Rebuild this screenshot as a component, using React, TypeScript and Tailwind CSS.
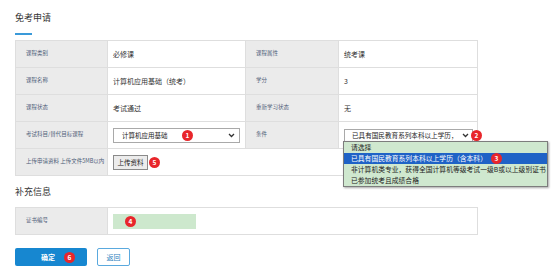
import React from "react";

const Badge = ({ n, className }: { n: number; className: string }) => (
  <span
    className={
      "absolute flex h-[11px] w-[11px] items-center justify-center rounded-full bg-[#e8262b] text-[6.5px] font-bold leading-none text-white " +
      className
    }
  >
    {n}
  </span>
);

const Chevron = () => (
  <svg width="7" height="5" viewBox="0 0 7 5" className="shrink-0">
    <path d="M1 1 L3.5 3.5 L6 1" stroke="#333" strokeWidth="1.3" fill="none" />
  </svg>
);

const Label = ({ children, colSpan }: { children: React.ReactNode; colSpan?: number }) => (
  <td
    colSpan={colSpan}
    className="border border-[#dedede] bg-[#ebebeb] pl-[10px] align-middle text-[5.5px] leading-none text-[#4f6079]"
  >
    {children}
  </td>
);

const Value = ({ children, colSpan }: { children?: React.ReactNode; colSpan?: number }) => (
  <td
    colSpan={colSpan}
    className="relative border border-[#dedede] bg-white pl-[5px] align-middle text-[7px] leading-none text-[#333]"
  >
    {children}
  </td>
);

export default function App() {
  return (
    <div
      className="relative h-[270px] w-[560px] overflow-hidden bg-white pl-[15px]"
      style={{ fontFamily: '"Noto Sans CJK SC", "Noto Sans", sans-serif' }}
    >
      <div className="pt-[12px] text-[9px] leading-[11px] text-[#333]">免考申请</div>
      <div className="mt-[10px] h-[2px] w-[17px] bg-[#3a9ad9]" />

      <table className="mt-[5px] w-[462px] table-fixed border-collapse">
        <colgroup>
          <col className="w-[92px]" />
          <col className="w-[138px]" />
          <col className="w-[93px]" />
          <col className="w-[139px]" />
        </colgroup>
        <tbody>
          <tr className="h-[27px]">
            <Label>课程类别</Label>
            <Value>必修课</Value>
            <Label>课程属性</Label>
            <Value>统考课</Value>
          </tr>
          <tr className="h-[27px]">
            <Label>课程名称</Label>
            <Value>计算机应用基础（统考）</Value>
            <Label>学分</Label>
            <Value>3</Value>
          </tr>
          <tr className="h-[27px]">
            <Label>课程状态</Label>
            <Value>考试通过</Value>
            <Label>重新学习状态</Label>
            <Value>无</Value>
          </tr>
          <tr className="h-[27px]">
            <Label>考试科目/替代目标课程</Label>
            <Value>
              <div className="relative flex h-[15px] w-[127px] items-center justify-between border border-[#a9a9a9] bg-white pl-[8px] pr-[4px] text-[6.5px] text-[#222]">
                <span>计算机应用基础</span>
                <Chevron />
                <Badge n={1} className="left-[68px] top-[1px]" />
              </div>
            </Value>
            <Label>条件</Label>
            <Value>
              <div className="relative flex h-[13px] w-[129px] items-center justify-between border border-[#a9a9a9] bg-white pl-[7px] pr-[3px] text-[6.6px] text-[#222]">
                <span className="whitespace-nowrap">已具有国民教育系列本科以上学历，</span>
                <Chevron />
                <Badge n={2} className="left-[126px] top-[0px]" />
              </div>
            </Value>
          </tr>
          <tr className="h-[27px]">
            <Label>上传申请资料 上传文件5MB以内</Label>
            <Value colSpan={3}>
              <div className="relative inline-flex">
                <div className="flex h-[15px] w-[35px] items-center justify-center border border-[#8a8a8a] bg-[#ececec] text-[6.5px] text-[#222]">
                  上传资料
                </div>
                <Badge n={5} className="left-[36px] top-[2px]" />
              </div>
            </Value>
          </tr>
        </tbody>
      </table>

      <div className="mt-[10px] text-[9px] leading-[12px] text-[#333]">补充信息</div>

      <table className="mt-[9px] w-[462px] table-fixed border-collapse">
        <colgroup>
          <col className="w-[92px]" />
          <col className="w-[370px]" />
        </colgroup>
        <tbody>
          <tr className="h-[27px]">
            <Label>证书编号</Label>
            <Value>
              <div className="relative h-[15px] w-[83px] bg-[#cde8cd]">
                <Badge n={4} className="left-[12px] top-[2px]" />
              </div>
            </Value>
          </tr>
        </tbody>
      </table>

      <div className="mt-[13px] flex gap-[10px]">
        <div className="relative flex h-[18px] w-[72px] items-center justify-center rounded-[2px] bg-[#1787d0] text-[7px] font-bold text-white">
          <span className="mr-[6px]">确定</span>
          <Badge n={6} className="left-[49px] top-[3.5px]" />
        </div>
        <div className="flex h-[18px] w-[33px] items-center justify-center rounded-[2px] border border-[#5aa9de] bg-white text-[7px] text-[#2f7fc0]">
          返回
        </div>
      </div>

      <div className="absolute left-[343px] top-[141px] w-[205px] border border-[#7d7d7d] bg-[#cfe8cf] text-[6.8px] leading-[11px] text-[#222] shadow-[1px_1px_2px_rgba(0,0,0,0.35)]">
        <div className="h-[11px] pl-[7px]">请选择</div>
        <div className="relative h-[11px] bg-[#1f62c6] pl-[7px] text-white">
          已具有国民教育系列本科以上学历（含本科）
          <Badge n={3} className="left-[147px] top-[0px]" />
        </div>
        <div className="h-[11px] whitespace-nowrap pl-[7px]">非计算机类专业，获得全国计算机等级考试一级B或以上级别证书</div>
        <div className="h-[11px] pl-[7px]">已参加统考且成绩合格</div>
      </div>
    </div>
  );
}
